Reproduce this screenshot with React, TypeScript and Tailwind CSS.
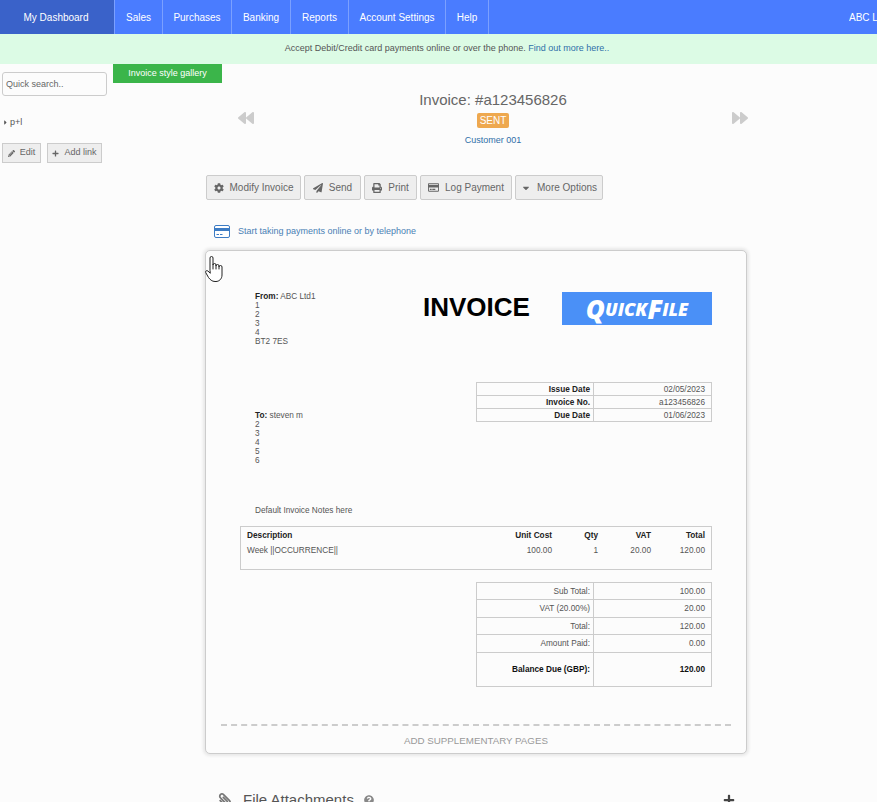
import {
  FaBackward,
  FaCaretDown,
  FaCaretRight,
  FaCog,
  FaForward,
  FaPaperPlane,
  FaPaperclip,
  FaPencilAlt,
  FaPlus,
  FaPrint,
  FaQuestionCircle,
  FaRegCreditCard,
} from "react-icons/fa";

const navItems = [
  { label: "Sales", w: "w-[48px]" },
  { label: "Purchases", w: "w-[69px]" },
  { label: "Banking", w: "w-[59px]" },
  { label: "Reports", w: "w-[58px]" },
  { label: "Account Settings", w: "w-[97px]" },
  { label: "Help", w: "w-[43px]" },
];

const actions = [
  { label: "Modify Invoice", icon: <FaCog size={10} />, w: "w-[95px]" },
  { label: "Send", icon: <FaPaperPlane size={10} />, w: "w-[57px]" },
  { label: "Print", icon: <FaPrint size={10} />, w: "w-[53px]" },
  { label: "Log Payment", icon: <FaRegCreditCard size={11} />, w: "w-[92px]" },
  { label: "More Options", icon: <FaCaretDown size={10} />, w: "w-[88px]" },
];

const metaRows = [
  ["Issue Date", "02/05/2023"],
  ["Invoice No.", "a123456826"],
  ["Due Date", "01/06/2023"],
];

const totals = [
  { label: "Sub Total:", value: "100.00", h: "h-[17px]" },
  { label: "VAT (20.00%)", value: "20.00", h: "h-[18px]" },
  { label: "Total:", value: "120.00", h: "h-[17px]" },
  { label: "Amount Paid:", value: "0.00", h: "h-[18px]" },
];

function Lines({ items }: { items: string[] }) {
  return (
    <>
      {items.map((line) => (
        <div key={line}>{line}</div>
      ))}
    </>
  );
}

export default function App() {
  return (
    <div className="relative h-[802px] w-[877px] overflow-hidden bg-[#fcfcfc] font-['Liberation_Sans',Arial,sans-serif] text-[#555]">
      {/* top nav */}
      <nav className="flex h-[34px] items-center justify-between bg-[#4a7cff] text-[10px] text-white">
        <div className="flex h-full">
          <div className="flex h-full w-[115px] items-center justify-center border-r border-[#7ba0ff] bg-[#3a62c9] pr-[2px]">
            My Dashboard
          </div>
          {navItems.map((item) => (
            <div key={item.label} className={`flex h-full items-center justify-center border-r border-[#7ba0ff] ${item.w}`}>
              {item.label}
            </div>
          ))}
        </div>
        <div className="w-[28px] overflow-hidden whitespace-nowrap">ABC Ltd1</div>
      </nav>

      <div className="flex h-[30px] items-center justify-center bg-[#dcfbe5] pb-[1px] pl-[17px] text-[9px] text-[#555]">
        <span>
          Accept Debit/Credit card payments online or over the phone. <span className="text-[#2f6fa8]">Find out more here..</span>
        </span>
      </div>

      <div className="flex">
        {/* left sidebar */}
        <aside className="w-[113px] shrink-0 pl-[2px] pt-[8px]">
          <div className="flex h-[24px] w-[105px] items-center rounded-[3px] border border-[#ccc] bg-[#fcfcfc] pl-[3px] pt-[1px] text-[9px] text-[#666]">
            Quick search..
          </div>
          <div className="mt-[21px] flex h-[11px] items-center text-[9px] text-[#555]">
            <FaCaretRight size={7} className="mr-[1px] text-[#555]" />
            p+l
          </div>
          <div className="mt-[15px] flex gap-[6px]">
            <div className="flex h-[20px] w-[39px] items-center justify-center gap-[5px] border border-[#ccc] bg-[#eee] text-[9px] text-[#666]">
              <FaPencilAlt size={7} />
              Edit
            </div>
            <div className="flex h-[20px] w-[55px] items-center justify-center gap-[5px] border border-[#ccc] bg-[#eee] text-[9px] text-[#666]">
              <FaPlus size={7} />
              Add link
            </div>
          </div>
        </aside>

        <div className="min-w-0 flex-1">
          <div className="flex h-[19px] w-[109px] items-center justify-center bg-[#3bb54a] text-[9px] text-white">
            Invoice style gallery
          </div>

          <main className="ml-[92px] w-[542px]">
            {/* title row */}
            <div className="ml-[33px] flex w-[510px] items-center justify-between pt-[8px] text-center">
              <FaBackward size={16} className="mb-[1px] text-[#ccc]" />
              <div className="flex flex-col items-center">
                <h1 className="text-[15px] leading-[18px] text-[#666]">Invoice: #a123456826</h1>
                <div className="mt-[4px] flex h-[15px] w-[32px] items-center justify-center rounded-[2px] bg-[#eea84f] text-[10px] text-white">
                  SENT
                </div>
                <div className="mt-[6px] text-[9px] leading-[12px] text-[#2f6fa8]">Customer 001</div>
              </div>
              <FaForward size={16} className="mb-[1px] text-[#ccc]" />
            </div>

            {/* action buttons */}
            <div className="ml-[1px] mt-[29px] flex gap-[3px]">
              {actions.map((action) => (
                <div
                  key={action.label}
                  className={`flex h-[25px] items-center justify-center gap-[6px] rounded-[2px] border border-[#ccc] bg-[#eee] text-[10px] text-[#666] ${action.w}`}
                >
                  {action.icon}
                  {action.label}
                </div>
              ))}
            </div>

            {/* payments prompt */}
            <div className="ml-[9px] mt-[23px] flex h-[16px] items-center gap-[8px] text-[9px] text-[#4a7fb5]">
              <svg width="16" height="13" viewBox="0 0 16 13">
                <rect x="0.5" y="0.5" width="15" height="12" rx="1.5" fill="#fff" stroke="#3d7cc4" />
                <rect x="1" y="3" width="14" height="3" fill="#3d7cc4" />
                <rect x="2.5" y="9" width="2.5" height="1" fill="#3d7cc4" />
                <rect x="6" y="9" width="2.5" height="1" fill="#3d7cc4" />
              </svg>
              <span className="pt-[1px]">Start taking payments online or by telephone</span>
            </div>

            {/* invoice sheet */}
            <section className="mt-[11px] h-[504px] rounded-[5px] border border-[#ccc] bg-[#fcfcfc] pl-[34px] pr-[34px] pt-[40px] text-[8.25px] leading-[9px] shadow-[0_0_3px_2px_#e8e8e8]">
              <div className="flex h-[91px] items-start">
                <div className="ml-[15px] w-[168px] pt-[1px]">
                  <div>
                    <b className="text-[#222]">From:</b> ABC Ltd1
                  </div>
                  <Lines items={["1", "2", "3", "4", "BT2 7ES"]} />
                </div>
                <div className="w-[139px] text-[26px] font-bold leading-[32px] text-black">INVOICE</div>
                <div className="mt-[1px] flex h-[33px] w-[150px] items-center justify-center bg-[#4a90f7] italic text-white">
                  <span className="font-['Open_Sans',sans-serif] text-[26px] font-extrabold leading-none">Q</span>
                  <span className="font-['Open_Sans',sans-serif] text-[18px] font-extrabold leading-none">UICK</span>
                  <span className="font-['Open_Sans',sans-serif] text-[26px] font-extrabold leading-none">F</span>
                  <span className="font-['Open_Sans',sans-serif] text-[18px] font-extrabold leading-none">ILE</span>
                </div>
              </div>

              <div className="flex h-[144px] items-start justify-between">
                <div className="ml-[15px] pt-[29px]">
                  <div>
                    <b className="text-[#222]">To:</b> steven m
                  </div>
                  <Lines items={["2", "3", "4", "5", "6"]} />
                  <div className="mt-[41px]">Default Invoice Notes here</div>
                </div>
                <div className="w-[236px] border border-b-0 border-[#ccc]">
                  {metaRows.map(([label, value]) => (
                    <div key={label} className="flex h-[13px] items-center border-b border-[#ccc]">
                      <div className="flex h-full w-[117px] items-center justify-end border-r border-[#ccc] pr-[3px] font-bold text-[#222]">
                        {label}
                      </div>
                      <div className="flex-1 pr-[6px] text-right">{value}</div>
                    </div>
                  ))}
                </div>
              </div>

              {/* line items */}
              <div className="h-[44px] w-[472px] border border-[#ccc] px-[6px] pt-[4px]">
                <div className="grid grid-cols-[1fr_60px_46px_53px_54px] text-right font-bold leading-[10px] text-[#222]">
                  <div className="text-left">Description</div>
                  <div>Unit Cost</div>
                  <div>Qty</div>
                  <div>VAT</div>
                  <div>Total</div>
                </div>
                <div className="mt-[5px] grid grid-cols-[1fr_60px_46px_53px_54px] text-right leading-[10px]">
                  <div className="text-left">Week ||OCCURRENCE||</div>
                  <div>100.00</div>
                  <div>1</div>
                  <div>20.00</div>
                  <div>120.00</div>
                </div>
              </div>

              {/* totals */}
              <div className="ml-auto mt-[12px] w-[236px] border border-b-0 border-[#ccc]">
                {totals.map((row) => (
                  <div key={row.label} className={`flex items-center border-b border-[#ccc] ${row.h}`}>
                    <div className="flex h-full w-[117px] items-center justify-end border-r border-[#ccc] pr-[3px]">{row.label}</div>
                    <div className="flex-1 pr-[6px] text-right">{row.value}</div>
                  </div>
                ))}
                <div className="flex h-[34px] items-center border-b border-[#ccc] font-bold text-[#111]">
                  <div className="flex h-full w-[117px] items-center justify-end border-r border-[#ccc] pr-[3px]">Balance Due (GBP):</div>
                  <div className="flex-1 pr-[6px] text-right">120.00</div>
                </div>
              </div>

              <div className="-mx-[19px] mt-[37px] border-t-2 border-dashed border-[#ccc] pt-[9px] text-center text-[9.75px] leading-[11px] text-[#999]">
                ADD SUPPLEMENTARY PAGES
              </div>
            </section>

            {/* attachments */}
            <div className="ml-[13px] mt-[37px] flex h-[18px] items-center justify-between text-[#555]">
              <div className="flex items-center">
                <FaPaperclip size={14} className="-scale-x-100 text-[#777]" />
                <span className="ml-[11px] text-[15px]">File Attachments</span>
                <FaQuestionCircle size={10} className="ml-[10px] text-[#888]" />
              </div>
              <FaPlus size={12} className="mr-[12px] text-[#444]" />
            </div>
          </main>
        </div>
      </div>

      {/* mouse cursor captured in the shot */}
      <svg width="18" height="26" viewBox="0 0 18 26" className="absolute left-[205px] top-[256px]" fill="#fff" stroke="#222" strokeWidth="1" strokeLinejoin="round" strokeLinecap="round">
        <path d="M5 14V2a1.5 1.5 0 0 1 3 0V9a1.5 1.5 0 0 1 3 0v1a1.5 1.5 0 0 1 3 0v1a1.5 1.5 0 0 1 3 0v8c0 4-3 6.5-6 6.5h-1c-3 0-5-2-6.5-4L.7 16.5c-.7-1.2 1-2.5 2.2-1.5L5 17Z" />
        <path d="M8 9v4M11 10v3M14 11v2" fill="none" />
      </svg>
    </div>
  );
}
